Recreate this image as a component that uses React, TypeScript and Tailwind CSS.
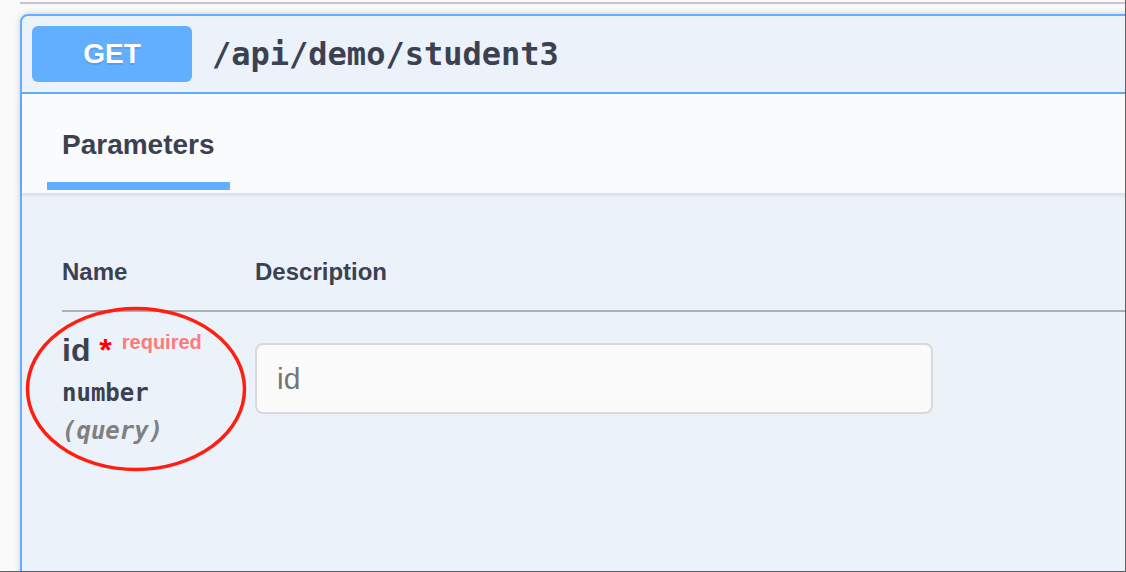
import React from 'react';

const sans = "font-['Liberation_Sans',Arial,sans-serif]";
const mono = "font-['DejaVu_Sans_Mono','Liberation_Mono',monospace]";

const RequiredParam: React.FC = () => {
  return (
    <div className="flex pt-[20px]">
      <div className="w-[193px] shrink-0">
        <div className={`${sans} whitespace-nowrap text-[32px] font-bold leading-[36px] text-[#3b4151]`}>
          id<span className="text-[#ff0000]">&nbsp;*</span>
          <span className="relative -top-[12px] px-[10px] text-[20px] text-[#fa7b7c]">required</span>
        </div>
        <div className={`${mono} pb-[10px] pt-[7px] text-[24px] font-bold leading-[28px] text-[#3b4151]`}>number</div>
        <div className={`${mono} text-[24px] font-bold italic leading-[28px] text-[#808080]`}>(query)</div>
      </div>
      <div className="pt-[11px]">
        <input
          placeholder="id"
          className={`${sans} h-[71px] w-[678px] rounded-[8px] border-2 border-[#d9d9d9] bg-[#fbfbfb] px-[20px] text-[30px] text-[#3b4151] outline-none placeholder:text-[#757575]`}
        />
      </div>
    </div>
  );
};

export default function App() {
  return (
    <div className="relative h-[572px] w-[1126px] overflow-hidden border-b border-r border-[#606060] bg-[#fafafa]">
      <div className="ml-[20px] mt-[2px] h-[2px] bg-[#c5c5cb]" />

      <div className="ml-[20px] mt-[10px] h-[620px] w-[1200px] rounded-[8px] border-2 border-[#61affe] bg-[#ebf2fa] shadow-[0_0_6px_rgba(0,0,0,0.19)]">
        {/* summary */}
        <div className="flex items-center border-b-2 border-[#61affe] p-[10px]">
          <span className={`${sans} flex h-[56px] w-[160px] items-center justify-center rounded-[6px] bg-[#61affe] text-[28px] font-bold text-white [text-shadow:0_2px_0_rgba(0,0,0,0.1)]`}>
            GET
          </span>
          <span className={`${mono} px-[20px] text-[32px] font-bold text-[#3b4151]`}>/api/demo/student3</span>
        </div>

        {/* tabs */}
        <div className="flex h-[99px] items-start bg-[#fafbfd] px-[40px] pt-[35px] shadow-[0_2px_4px_rgba(0,0,0,0.1)]">
          <div className="flex flex-col items-center">
            <h4 className={`${sans} text-[28px] font-bold leading-[32px] text-[#3b4151]`}>Parameters</h4>
            <div className="mt-[21px] h-[8px] w-[120%] shrink-0 bg-[#61affe]" />
          </div>
        </div>

        {/* parameters table */}
        <div className="px-[40px] pt-[41px]">
          <div className={`${sans} flex border-b-2 border-[#a9aeb8] pb-[25px] pt-[24px] text-[24px] font-bold leading-[27px] text-[#3b4151]`}>
            <div className="w-[193px] shrink-0">Name</div>
            <div>Description</div>
          </div>
          <RequiredParam />
        </div>
      </div>

      {/* annotation */}
      <svg className="absolute left-[25px] top-[306px]" width="222" height="166" viewBox="0 0 222 166">
        <ellipse cx="111" cy="83" rx="108.5" ry="80.5" fill="none" stroke="#ff1e10" strokeWidth="3.5" />
      </svg>
    </div>
  );
}
